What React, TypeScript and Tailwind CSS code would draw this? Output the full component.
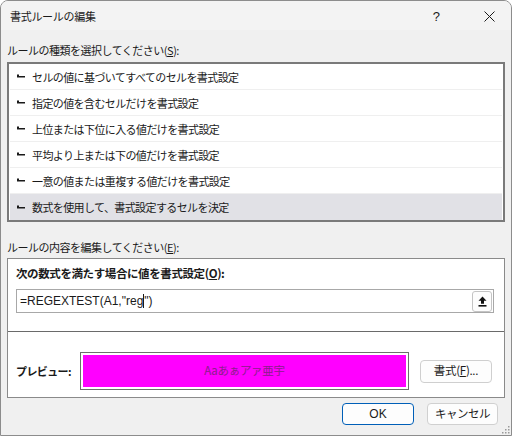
import React from "react";

const rules = [
    "セルの値に基づいてすべてのセルを書式設定",
    "指定の値を含むセルだけを書式設定",
    "上位または下位に入る値だけを書式設定",
    "平均より上または下の値だけを書式設定",
    "一意の値または重複する値だけを書式設定",
    "数式を使用して、書式設定するセルを決定",
];

const Bullet = () => (
    <svg width="8" height="5" viewBox="0 0 8 5" className="shrink-0">
        <path d="M0 0.5 L2 0.5 L2 2 L8 2 L8 3.5 L0 3.5 Z" fill="#1a1a1a" />
    </svg>
);

const App = () => {
    return (
        <div className="relative w-[512px] h-[436px] flex flex-col bg-[#f0f0f0] border border-[#8c8c8c] rounded-t-[8px] overflow-hidden text-[#1a1a1a] font-['Noto_Sans_CJK_JP',sans-serif]">
            {/* Title bar */}
            <div className="h-[29px] shrink-0 flex items-center bg-[#f3f3f3] pl-[9px]">
                <span className="text-[11px] tracking-[-0.3px] mt-[2px]">書式ルールの編集</span>
                <div className="ml-auto flex items-center">
                    <span className="text-[13px] font-['Liberation_Sans',sans-serif] mr-[44px] mt-[2px]">?</span>
                    <svg width="11" height="11" viewBox="0 0 11 11" className="mr-[16px] mt-[2px]">
                        <path d="M0.5 0.5 L10.5 10.5 M10.5 0.5 L0.5 10.5" stroke="#1a1a1a" strokeWidth="1" />
                    </svg>
                </div>
            </div>

            {/* Body */}
            <div className="flex-1 flex flex-col pl-[6px] pr-[6px] pt-[12px]">
                <div className="h-[16px] leading-[16px] text-[11px] tracking-[-0.5px]">
                    ルールの種類を選択してください(<span className="underline">S</span>):
                </div>

                {/* Rule type list */}
                <div className="mt-[4px] h-[160px] border-2 border-[#7a7a7a] bg-white px-px flex flex-col">
                    {rules.map((r, i) => (
                        <div
                            key={r}
                            className={
                                i === rules.length - 1
                                    ? "h-[26px] flex items-center pl-[7px] gap-[7px] bg-[#e1e1e6]"
                                    : "h-[26px] flex items-center pl-[7px] gap-[7px] border-b border-[#efefef]"
                            }
                        >
                            <Bullet />
                            <span className="text-[11px] tracking-[-0.6px] leading-[16px]">{r}</span>
                        </div>
                    ))}
                </div>

                <div className="mt-[17px] h-[16px] leading-[16px] text-[11px] tracking-[-0.5px]">
                    ルールの内容を編集してください(<span className="underline">E</span>):
                </div>

                {/* Rule description panel */}
                <div className="mt-[3px] h-[140px] border border-[#8a8a8a] bg-white flex flex-col">
                    <div className="mt-[6px] pl-[8px] h-[16px] leading-[16px] text-[11.5px] font-bold tracking-[-0.4px]">
                        次の数式を満たす場合に値を書式設定(<span className="underline">O</span>):
                    </div>
                    <div className="mt-[8px] ml-[8px] mr-[10px] h-[24px] border border-[#a8a8a8] flex items-center">
                        <span className="pl-[3px] text-[12px] font-['Liberation_Sans',sans-serif] flex items-center">
                            =REGEXTEST(A1,"reg<span className="inline-block w-px h-[14px] bg-[#1a1a1a]" />")
                        </span>
                        <div className="ml-auto mr-px h-[21px] w-[20px] rounded-[3px] border border-[#c4c4c4] bg-[#fdfdfd] flex items-center justify-center">
                            <svg width="9" height="11" viewBox="0 0 9 11">
                                <path d="M4.5 0.5 L8.5 4.8 L6 4.8 L6 7.8 L3 7.8 L3 4.8 L0.5 4.8 Z" fill="#111" />
                                <rect x="0.5" y="9" width="8" height="1.6" fill="#111" />
                            </svg>
                        </div>
                    </div>
                    <div className="mt-[18px] h-px bg-[#6a6a6a]" />
                    <div className="mt-[20px] flex items-center">
                        <span className="w-[72px] pl-[8px] text-[11px] font-bold tracking-[-0.6px]">プレビュー:</span>
                        <div className="w-[329px] h-[38px] border border-[#6e6e6e] p-[2px] bg-white">
                            <div className="w-full h-full bg-[#ff00ff] flex items-center justify-center">
                                <span className="text-[11.5px] text-[#8a1f8a] tracking-[-0.3px]">Aaあぁアァ亜宇</span>
                            </div>
                        </div>
                        <button className="ml-[11px] w-[72px] h-[23px] rounded-[4px] border border-[#cfcfcf] bg-[#fdfdfd] text-[11.5px] tracking-[-0.3px] flex items-center justify-center">
                            書式(<span className="underline">F</span>)...
                        </button>
                    </div>
                </div>

                {/* Dialog buttons */}
                <div className="mt-[5px] flex justify-end gap-[13px] pr-[7px]">
                    <button className="w-[72px] h-[22px] rounded-[4px] border border-[#005fb8] bg-[#fdfdfd] text-[12px] font-['Liberation_Sans',sans-serif] flex items-center justify-center">
                        OK
                    </button>
                    <button className="w-[71px] h-[22px] rounded-[4px] border border-[#d0d0d0] bg-[#fdfdfd] text-[11.5px] tracking-[-0.5px] flex items-center justify-center">
                        キャンセル
                    </button>
                </div>
            </div>

            {/* Resize grip */}
            <svg width="9" height="9" viewBox="0 0 9 9" className="absolute right-[1px] bottom-[1px]">
                <rect x="7" y="1" width="1.5" height="1.5" fill="#9a9a9a" />
                <rect x="4" y="4" width="1.5" height="1.5" fill="#9a9a9a" />
                <rect x="7" y="4" width="1.5" height="1.5" fill="#9a9a9a" />
                <rect x="1" y="7" width="1.5" height="1.5" fill="#9a9a9a" />
                <rect x="4" y="7" width="1.5" height="1.5" fill="#9a9a9a" />
                <rect x="7" y="7" width="1.5" height="1.5" fill="#9a9a9a" />
            </svg>
        </div>
    );
};

export default App;
